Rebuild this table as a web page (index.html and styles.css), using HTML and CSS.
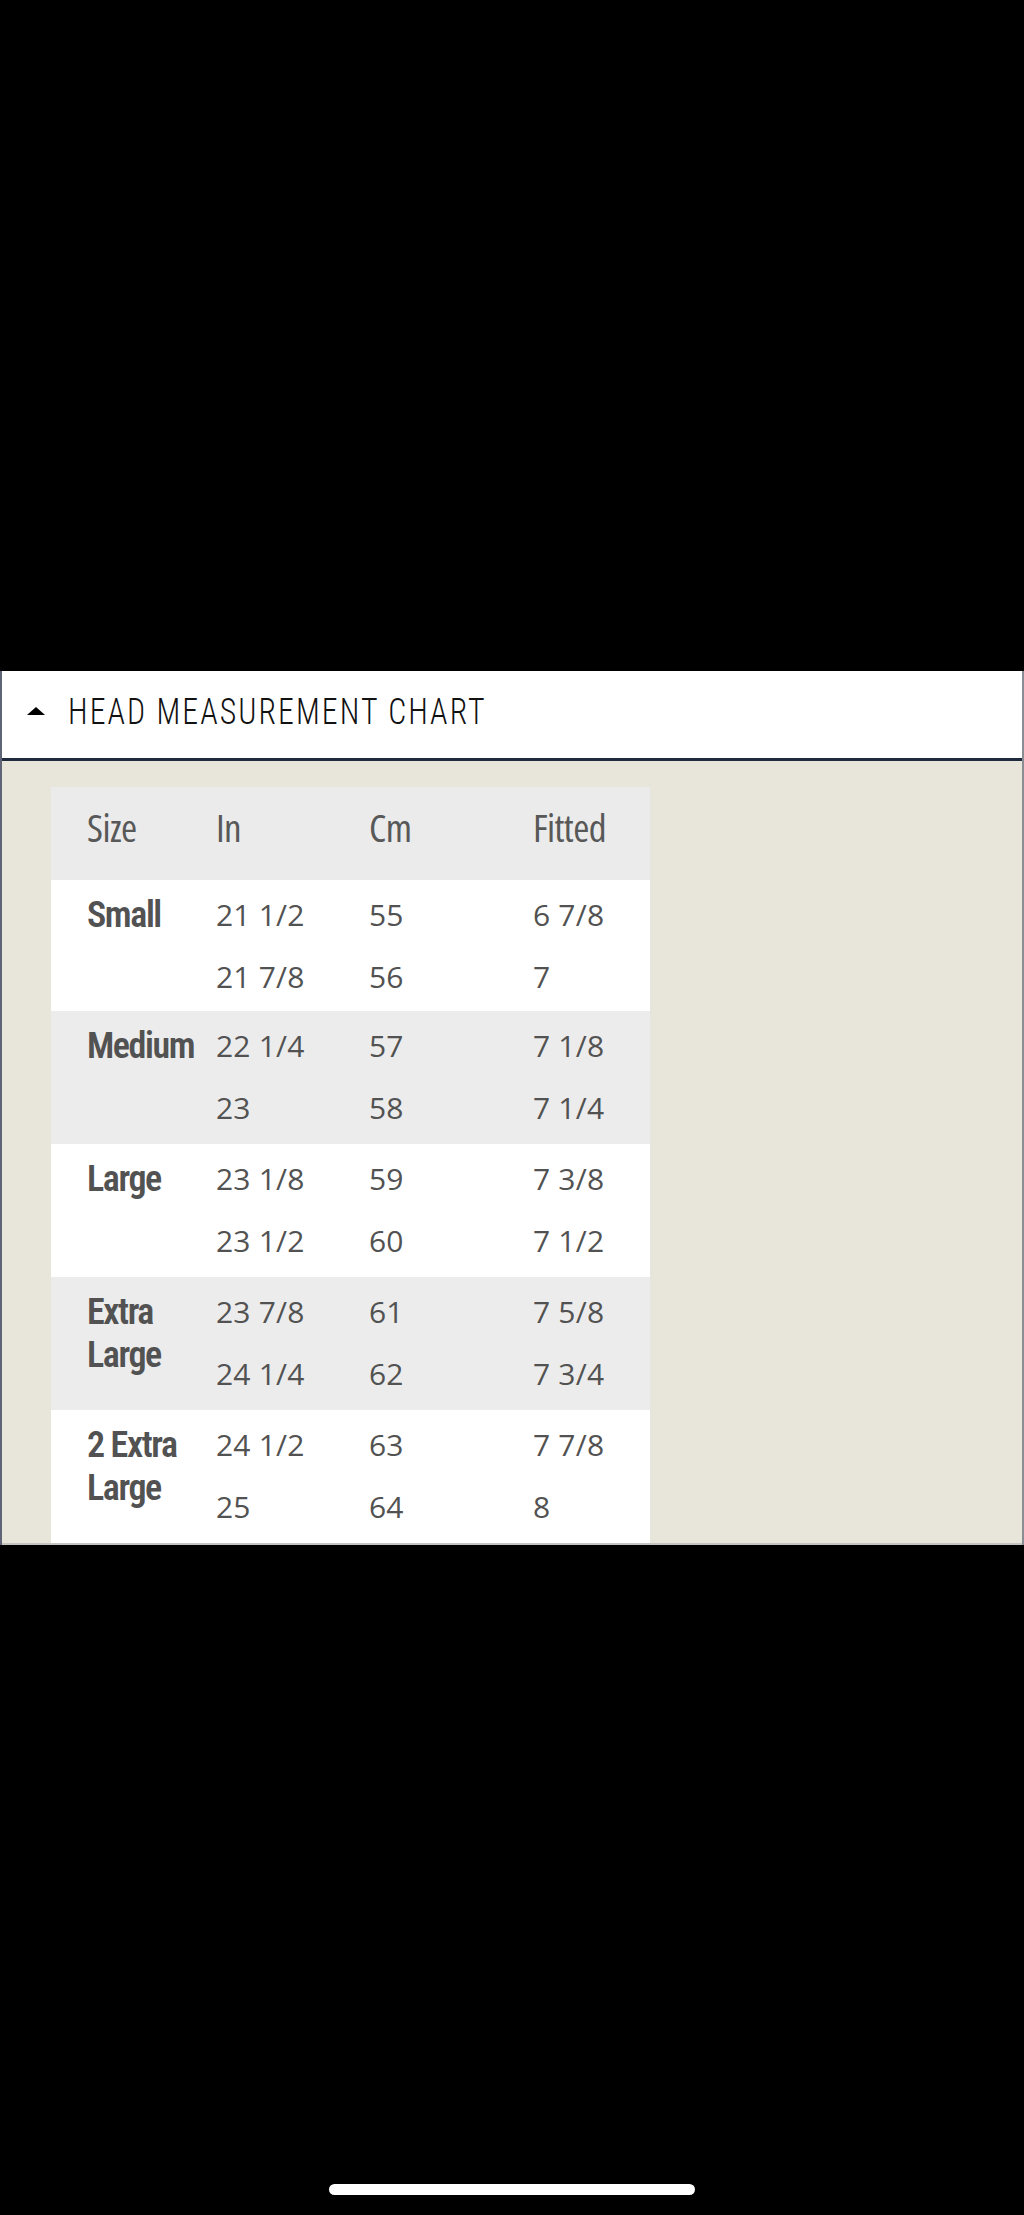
FILE: index.html
```html
<!DOCTYPE html>
<html lang="en">
<head>
<meta charset="utf-8">
<title>Head Measurement Chart</title>
<link rel="stylesheet" href="styles.css">
</head>
<body>
<div class="screen">
  <div class="top-space"></div>
  <section class="accordion">
    <header class="acc-header">
      <span class="caret"></span>
      <h2 class="acc-title">HEAD MEASUREMENT CHART</h2>
    </header>
    <div class="acc-body">
      <div class="chart">
        <div class="row head">
          <div class="label">Size</div>
          <div class="label">In</div>
          <div class="label">Cm</div>
          <div class="label">Fitted</div>
        </div>
        <div class="row light">
          <div class="size">Small</div>
          <div class="vals"><span>21 1/2</span><span>21 7/8</span></div>
          <div class="vals"><span>55</span><span>56</span></div>
          <div class="vals"><span>6 7/8</span><span>7</span></div>
        </div>
        <div class="row grey">
          <div class="size">Medium</div>
          <div class="vals"><span>22 1/4</span><span>23</span></div>
          <div class="vals"><span>57</span><span>58</span></div>
          <div class="vals"><span>7 1/8</span><span>7 1/4</span></div>
        </div>
        <div class="row light">
          <div class="size">Large</div>
          <div class="vals"><span>23 1/8</span><span>23 1/2</span></div>
          <div class="vals"><span>59</span><span>60</span></div>
          <div class="vals"><span>7 3/8</span><span>7 1/2</span></div>
        </div>
        <div class="row grey">
          <div class="size"><span>Extra</span><span>Large</span></div>
          <div class="vals"><span>23 7/8</span><span>24 1/4</span></div>
          <div class="vals"><span>61</span><span>62</span></div>
          <div class="vals"><span>7 5/8</span><span>7 3/4</span></div>
        </div>
        <div class="row light">
          <div class="size"><span>2 Extra</span><span>Large</span></div>
          <div class="vals"><span>24 1/2</span><span>25</span></div>
          <div class="vals"><span>63</span><span>64</span></div>
          <div class="vals"><span>7 7/8</span><span>8</span></div>
        </div>
      </div>
    </div>
  </section>
  <div class="bottom-space">
    <div class="home-indicator"></div>
  </div>
</div>
</body>
</html>
```
FILE: styles.css
```css
* { box-sizing: border-box; }
html, body {
  margin: 0;
  padding: 0;
  background: #000;
}
.screen {
  width: 1024px;
  height: 2215px;
  display: flex;
  flex-direction: column;
  background: #000;
  font-family: "Open Sans", "Liberation Sans", sans-serif;
}
.top-space {
  height: 671px;
  flex: none;
}
.accordion {
  flex: none;
  border-left: 2px solid #5f6576;
  border-right: 2px solid #8a8d94;
}
.acc-header {
  height: 90px;
  background: #fff;
  border-bottom: 3px solid #1f2a3f;
  display: flex;
  align-items: center;
  padding-left: 25px;
  padding-bottom: 7px;
}
.caret {
  flex: none;
  width: 0;
  height: 0;
  border-left: 9.5px solid transparent;
  border-right: 9.5px solid transparent;
  border-bottom: 8px solid #000;
  margin-right: 23px;
}
.acc-title {
  margin: 0;
  font-family: "Roboto Condensed", "Roboto", sans-serif;
  font-stretch: 75%;
  font-weight: 300;
  font-size: 37px;
  letter-spacing: 2.4px;
  color: #111;
  line-height: 1;
  white-space: nowrap;
  transform: scaleX(0.86);
  transform-origin: left center;
}
.acc-body {
  background: #e8e6da;
  padding: 26px 0 0 49px;
  border-bottom: 2px solid #c4c4c0;
}
.chart {
  width: 599px;
  display: flex;
  flex-direction: column;
}
.row {
  display: grid;
  grid-template-columns: 129px 153px 164px 1fr;
  padding-left: 36px;
  color: #545454;
}
.row.head {
  height: 93px;
  background: #ebebeb;
  align-items: center;
  padding-bottom: 12px;
}
.row.light { background: #fff; height: 133px; }
.row.grey { background: #ececec; height: 133px; }
.row.light:nth-child(2) { height: 131px; }
.label {
  font-family: "Open Sans", sans-serif;
  font-stretch: 75%;
  font-weight: 400;
  font-size: 39px;
  letter-spacing: -0.6px;
  color: #585858;
  line-height: 1.2;
}
.size {
  display: flex;
  flex-direction: column;
  padding-top: 14px;
  font-family: "Roboto Condensed", "Roboto", sans-serif;
  font-stretch: 75%;
  font-weight: 600;
  font-size: 36px;
  letter-spacing: -1.4px;
  line-height: 43px;
  color: #525252;
}
.vals {
  display: flex;
  flex-direction: column;
  padding-top: 4px;
  font-size: 30px;
  letter-spacing: 0.2px;
  line-height: 62px;
  color: #525252;
}
.bottom-space {
  flex: 1;
  display: flex;
  justify-content: center;
  align-items: flex-end;
  padding-bottom: 20px;
}
.home-indicator {
  width: 366px;
  height: 11px;
  border-radius: 6px;
  background: #fff;
}
```
